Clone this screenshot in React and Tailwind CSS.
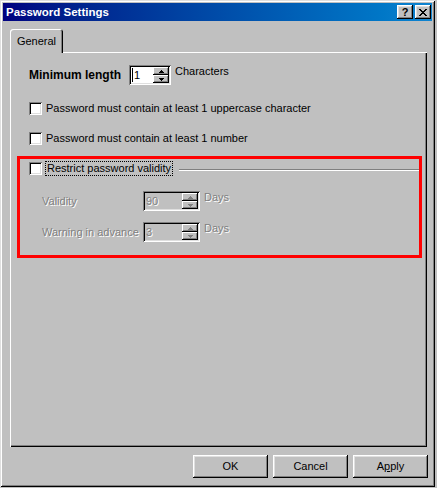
import React from 'react';

// classic 3d borders
const RAISED = 'shadow-[inset_-1px_-1px_0_#000,inset_1px_1px_0_#fff,inset_-2px_-2px_0_#808080,inset_2px_2px_0_#dfdfdf]';
const SPIN = 'shadow-[inset_-1px_-1px_0_#000,inset_1px_1px_0_#fff,inset_-2px_-2px_0_#808080]';
const SUNKEN = 'shadow-[inset_1px_1px_0_#808080,inset_-1px_-1px_0_#fff,inset_2px_2px_0_#000,inset_-2px_-2px_0_#dfdfdf]';
const WINDOW = 'shadow-[inset_1px_1px_0_#dfdfdf,inset_-1px_-1px_0_#000,inset_2px_2px_0_#fff,inset_-2px_-2px_0_#808080]';
const DIM = 'text-[#808080] [text-shadow:1px_1px_0_#fff]';

const Arrow = ({ up, disabled }) => (
    <svg width="5" height="3" viewBox="0 0 5 3" shapeRendering="crispEdges" className={disabled ? 'fill-[#808080]' : 'fill-black'}>
        <path d={up ? 'M2 0h1v1H2z M1 1h3v1H1z M0 2h5v1H0z' : 'M0 0h5v1H0z M1 1h3v1H1z M2 2h1v1H2z'} />
    </svg>
);

const Spinner = ({ value, className, disabled, caret }) => (
    <div className={`flex h-[20px] p-[2px] ${SUNKEN} ${disabled ? 'bg-[#c0c0c0]' : 'bg-white'} ${className}`}>
        <div className={`flex-1 flex items-center pl-[1px] ${disabled ? DIM : ''}`}>
            {caret && <span className="w-[1px] h-[14px] bg-black mr-[1px]" />}
            {value}
        </div>
        <div className="w-[16px] flex flex-col">
            <div className={`h-[8px] flex items-center justify-center bg-[#c0c0c0] ${SPIN}`}>
                <Arrow up disabled={disabled} />
            </div>
            <div className={`h-[8px] flex items-center justify-center bg-[#c0c0c0] ${SPIN}`}>
                <Arrow disabled={disabled} />
            </div>
        </div>
    </div>
);

const Checkbox = () => <div className={`w-[13px] h-[13px] shrink-0 bg-white ${SUNKEN}`} />;

const TitleButton = ({ children }) => (
    <div className={`w-[16px] h-[14px] flex items-center justify-center bg-[#c0c0c0] ${RAISED}`}>
        {children}
    </div>
);

const Button = ({ children }) => (
    <div className={`w-[75px] h-[23px] flex items-center justify-center bg-[#c0c0c0] ${RAISED}`}>
        {children}
    </div>
);

export default function App() {
    return (
        <div className="w-[437px] h-[488px] bg-[#c0c0c0] font-['Liberation_Sans',Arial,sans-serif] text-[11px] leading-[13px] text-black select-none">
            <div className={`w-[435px] h-[487px] p-[3px] flex flex-col ${WINDOW}`}>
                {/* title bar */}
                <div className="h-[18px] flex items-center pl-[3px] pr-[1px] bg-linear-to-r from-[#000080] to-[#1084d0]">
                    <span className="font-bold text-white text-[11.5px]">Password Settings</span>
                    <div className="ml-auto flex gap-[2px]">
                        <TitleButton>
                            <span className="font-bold text-[11px] leading-none mt-[1px]">?</span>
                        </TitleButton>
                        <TitleButton>
                            <svg width="8" height="7" viewBox="0 0 8 7" shapeRendering="crispEdges" className="fill-black">
                                <path d="M0 0h2v1H0z M6 0h2v1H6z M1 1h2v1H1z M5 1h2v1H5z M2 2h4v1H2z M3 3h2v1H3z M2 4h4v1H2z M1 5h2v1H1z M5 5h2v1H5z M0 6h2v1H0z M6 6h2v1H6z" />
                            </svg>
                        </TitleButton>
                    </div>
                </div>

                {/* tab control */}
                <div className="mt-[8px] ml-[7px] flex flex-col">
                    <div className="relative z-10 -mb-[1px] w-[53px] h-[24px] flex items-center justify-center rounded-t-[3px] bg-[#c0c0c0] shadow-[inset_1px_1px_0_#fff,inset_-1px_0_0_#000,inset_-2px_0_0_#808080]">
                        General
                    </div>
                    <div className="w-[417px] h-[395px] flex flex-col pl-[7px] pt-[13px] shadow-[inset_1px_1px_0_#fff,inset_-1px_-1px_0_#000,inset_-2px_-2px_0_#808080]">
                        <div className="flex items-center pl-[12px] h-[20px]">
                            <span className="w-[100px] font-bold text-[12px] mt-[1px]">Minimum length</span>
                            <Spinner value="1" caret className="w-[42px]" />
                            <span className="self-start ml-[4px]">Characters</span>
                        </div>

                        <div className="flex items-center gap-[4px] pl-[12px] mt-[17px] h-[13px]">
                            <Checkbox />
                            <span>Password must contain at least 1 uppercase character</span>
                        </div>
                        <div className="flex items-center gap-[4px] pl-[12px] mt-[17px] h-[13px]">
                            <Checkbox />
                            <span>Password must contain at least 1 number</span>
                        </div>

                        {/* highlighted group */}
                        <div className="mt-[11px] w-[405px] h-[102px] border-[3px] border-[#ff0000] flex flex-col">
                            <div className="flex items-center mt-[2px] pl-[9px] h-[15px]">
                                <Checkbox />
                                <span className="ml-[3px] h-[15px] px-[1px] border border-dotted border-black">
                                    Restrict password validity
                                </span>
                                <div className="flex-1 self-start mt-[8px] ml-[6px] h-0 border-t border-t-[#808080] border-b border-b-white" />
                            </div>

                            <div className="flex items-center pl-[22px] mt-[15px] h-[20px]">
                                <span className={`w-[101px] ${DIM}`}>Validity</span>
                                <Spinner value="90" disabled className="w-[57px]" />
                                <span className={`self-start ml-[4px] ${DIM}`}>Days</span>
                            </div>
                            <div className="flex items-center pl-[22px] mt-[11px] h-[20px]">
                                <span className={`w-[101px] ${DIM}`}>Warning in advance</span>
                                <Spinner value="3" disabled className="w-[57px]" />
                                <span className={`self-start ml-[4px] ${DIM}`}>Days</span>
                            </div>
                        </div>
                    </div>
                </div>

                {/* dialog buttons */}
                <div className="mt-[8px] flex justify-end gap-[5px] pr-[4px]">
                    <Button>OK</Button>
                    <Button>Cancel</Button>
                    <Button>
                        <span>A<span className="underline">p</span>ply</span>
                    </Button>
                </div>
            </div>
        </div>
    );
}
